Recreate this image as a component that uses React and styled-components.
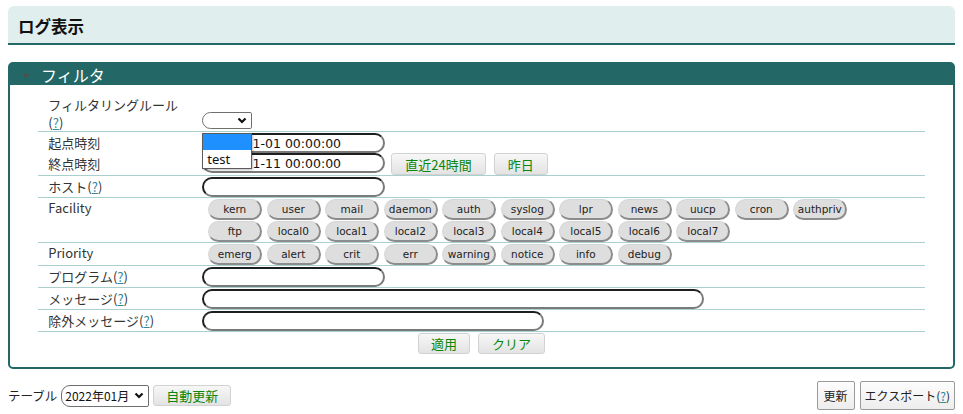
import React from "react";
import styled, { createGlobalStyle } from "styled-components";

const Global = createGlobalStyle`
  html, body { background: #fff; }
  body {
    margin: 6px 8px;
    font-family: "Noto Sans CJK JP", "Noto Sans", sans-serif;
    font-size: 13px;
    color: #333;
  }
  * { box-sizing: border-box; }
`;

const TEAL = "#236866";
const LINE = "#a9cfcf";
const GREEN = "#0a870a";

const TitleBar = styled.div`
  height: 39px;
  background: #e0eeee;
  border-bottom: 2px solid ${TEAL};
  border-radius: 6px 6px 0 0;
  display: flex;
  align-items: center;
  padding: 2px 0 0 10px;
`;

const Title = styled.h1`
  margin: 0;
  font-size: 16.5px;
  font-weight: bold;
  color: #111;
`;

const Panel = styled.section`
  margin-top: 17px;
  border: 2px solid ${TEAL};
  border-radius: 5px;
`;

const PanelHead = styled.div`
  height: 21px;
  background: ${TEAL};
  color: #fff;
  font-size: 16px;
  display: flex;
  align-items: center;
  gap: 11px;
  padding-left: 12px;
  line-height: 1;
`;

const Caret = styled.span`
  width: 0;
  height: 0;
  border-left: 4px solid transparent;
  border-right: 4px solid transparent;
  border-top: 4px solid #4e4e4e;
  margin-top: 2px;
`;

const PanelBody = styled.div`
  padding: 11px 0 13px;
`;

const FilterTable = styled.div`
  width: 94%;
  margin: 0 auto;
`;

const Row = styled.div`
  display: grid;
  grid-template-columns: 164px 1fr;
  border-bottom: 1px solid ${LINE};
`;

const Label = styled.div`
  padding-left: 10px;
  line-height: ${(p) => p.$lh || 21}px;
  padding-top: ${(p) => p.$pt || 0}px;
  color: #333;
  white-space: nowrap;
`;

const Value = styled.div`
  padding-top: 1px;
  display: flex;
  flex-direction: column;
  align-items: flex-start;
  justify-content: ${(p) => (p.$end ? "flex-end" : "flex-start")};
  padding-bottom: ${(p) => p.$pb || 0}px;
`;

const Line = styled.div`
  display: flex;
  align-items: flex-start;
  gap: ${(p) => p.$gap || 0}px;
`;

const Help = styled.span`
  color: #333;
  a {
    color: #2d88a0;
    text-decoration: underline;
  }
`;

const HelpMark = () => (
  <Help>
    (<a>?</a>)
  </Help>
);

const TextInput = styled.input`
  width: ${(p) => p.$w || 183}px;
  height: 20px;
  margin: 0;
  padding: 0 4px;
  border-style: solid;
  border-width: 2px;
  border-color: #1e1e1e #7a7a7a #7a7a7a #1e1e1e;
  border-radius: 10px;
  background: #fff;
  font-family: "DejaVu Sans", sans-serif;
  font-size: 12.5px;
  color: #111;
  outline: none;
`;

const SelectWrap = styled.div`
  position: relative;
  display: inline-flex;
`;

const SelectBox = styled.div`
  width: ${(p) => p.$w}px;
  height: ${(p) => p.$h}px;
  flex: none;
  border: 1px solid #6f6f6f;
  border-radius: 9px 2px 2px 9px;
  background: #fff;
  display: flex;
  align-items: center;
  padding: 0 4px 0 3px;
  font-family: "Noto Sans CJK JP", sans-serif;
  font-size: 12px;
  color: #111;
  white-space: nowrap;
  gap: 2px;
  svg { margin-left: auto; flex: none; }
`;

const Popup = styled.div`
  position: absolute;
  left: 0;
  top: calc(100% + 4px);
  width: 50px;
  border: 1px solid #5c5c5c;
  background: #fff;
  box-shadow: 1px 1px 2px rgba(0, 0, 0, 0.25);
  z-index: 5;
  font-family: "Noto Sans", sans-serif;
  font-size: 13px;
`;

const Option = styled.div`
  height: ${(p) => (p.$sel ? 16 : 18)}px;
  line-height: 18px;
  padding-left: 4px;
  background: ${(p) => (p.$sel ? "#1e90ff" : "#fff")};
  color: #111;
`;

const Chevron = () => (
  <svg width="10" height="7" viewBox="0 0 10 7">
    <path d="M1.5 1.5 L5 5 L8.5 1.5" fill="none" stroke="#111" strokeWidth="2.2" />
  </svg>
);

const GreenButton = styled.button`
  height: ${(p) => p.$h || 22}px;
  padding: 0 ${(p) => p.$px || 13}px;
  margin: 0;
  flex: none;
  border: 1px solid #d2d2d2;
  border-radius: 3px;
  background: linear-gradient(#f7f7f7, #e3e3e3);
  color: ${GREEN};
  font-family: "Noto Sans CJK JP", sans-serif;
  font-size: 13px;
  line-height: 1;
  white-space: nowrap;
`;

const PillGrid = styled.div`
  display: flex;
  flex-wrap: wrap;
  width: 660px;
  padding-left: 6px;
  column-gap: 4.5px;
  row-gap: 1px;
`;

const Pill = styled.button`
  width: 54px;
  height: 21px;
  margin: 0;
  padding: 0;
  border-style: solid;
  border-width: 1px 2px 2px 1px;
  border-color: #d6d6d6 #8c8c8c #8c8c8c #d6d6d6;
  border-radius: 11px;
  background: #dedede;
  color: #222;
  font-family: "DejaVu Sans", sans-serif;
  font-size: 10.5px;
  line-height: 1;
`;

const Actions = styled.div`
  display: flex;
  justify-content: center;
  gap: 8px;
  margin-top: 1px;
`;

const Footer = styled.div`
  margin-top: 12px;
  display: flex;
  justify-content: space-between;
  align-items: center;
`;

const FooterLeft = styled.div`
  display: flex;
  align-items: center;
  gap: 4px;
  font-size: 12.5px;
  color: #222;
  white-space: nowrap;
`;

const FooterRight = styled.div`
  display: flex;
  gap: 5px;
`;

const PlainButton = styled.button`
  height: 29px;
  padding: 0 ${(p) => p.$px || 6}px;
  margin: 0;
  border: 1px solid #9a9a9a;
  border-radius: 2px;
  background: linear-gradient(#fdfdfd, #ededed);
  color: #222;
  font-family: "Noto Sans CJK JP", sans-serif;
  font-size: 12px;
  line-height: 1;
  white-space: nowrap;
  a { color: #2d88a0; text-decoration: underline; }
`;

const facilities = [
  "kern", "user", "mail", "daemon", "auth", "syslog", "lpr", "news", "uucp", "cron", "authpriv",
  "ftp", "local0", "local1", "local2", "local3", "local4", "local5", "local6", "local7",
];
const priorities = ["emerg", "alert", "crit", "err", "warning", "notice", "info", "debug"];

export default function App() {
  return (
    <>
      <Global />
      <TitleBar>
        <Title>ログ表示</Title>
      </TitleBar>
      <Panel>
        <PanelHead>
          <Caret />
          フィルタ
        </PanelHead>
        <PanelBody>
          <FilterTable>
            <Row>
              <Label $lh={17.5} $pt={0}>
                フィルタリングルール
                <br />
                <HelpMark />
              </Label>
              <Value $end $pb={2}>
                <SelectWrap>
                  <SelectBox $w={50} $h={17}>
                    <Chevron />
                  </SelectBox>
                  <Popup>
                    <Option $sel />
                    <Option>test</Option>
                  </Popup>
                </SelectWrap>
              </Value>
            </Row>
            <Row>
              <Label>
                起点時刻
                <br />
                終点時刻
              </Label>
              <Value>
                <TextInput defaultValue="2022-01-01 00:00:00" />
                <Line $gap={6}>
                  <TextInput defaultValue="2022-01-11 00:00:00" />
                  <Line $gap={8}>
                    <GreenButton>直近24時間</GreenButton>
                    <GreenButton>昨日</GreenButton>
                  </Line>
                </Line>
              </Value>
            </Row>
            <Row>
              <Label>
                ホスト<HelpMark />
              </Label>
              <Value>
                <TextInput />
              </Value>
            </Row>
            <Row>
              <Label $lh={19}>Facility</Label>
              <Value>
                <PillGrid>
                  {facilities.map((f) => (
                    <Pill key={f}>{f}</Pill>
                  ))}
                </PillGrid>
              </Value>
            </Row>
            <Row>
              <Label $lh={19}>Priority</Label>
              <Value>
                <PillGrid>
                  {priorities.map((f) => (
                    <Pill key={f}>{f}</Pill>
                  ))}
                </PillGrid>
              </Value>
            </Row>
            <Row>
              <Label>
                プログラム<HelpMark />
              </Label>
              <Value>
                <TextInput />
              </Value>
            </Row>
            <Row>
              <Label>
                メッセージ<HelpMark />
              </Label>
              <Value>
                <TextInput $w={502} />
              </Value>
            </Row>
            <Row>
              <Label>
                除外メッセージ<HelpMark />
              </Label>
              <Value>
                <TextInput $w={342} />
              </Value>
            </Row>
          </FilterTable>
          <Actions>
            <GreenButton $h={21} $px={12}>適用</GreenButton>
            <GreenButton $h={21} $px={13}>クリア</GreenButton>
          </Actions>
        </PanelBody>
      </Panel>
      <Footer>
        <FooterLeft>
          テーブル
          <SelectBox $w={88} $h={22}>
            2022年01月
            <Chevron />
          </SelectBox>
          <GreenButton $h={21} $px={12}>自動更新</GreenButton>
        </FooterLeft>
        <FooterRight>
          <PlainButton $px={6}>更新</PlainButton>
          <PlainButton $px={4}>
            エクスポート(<a>?</a>)
          </PlainButton>
        </FooterRight>
      </Footer>
    </>
  );
}
